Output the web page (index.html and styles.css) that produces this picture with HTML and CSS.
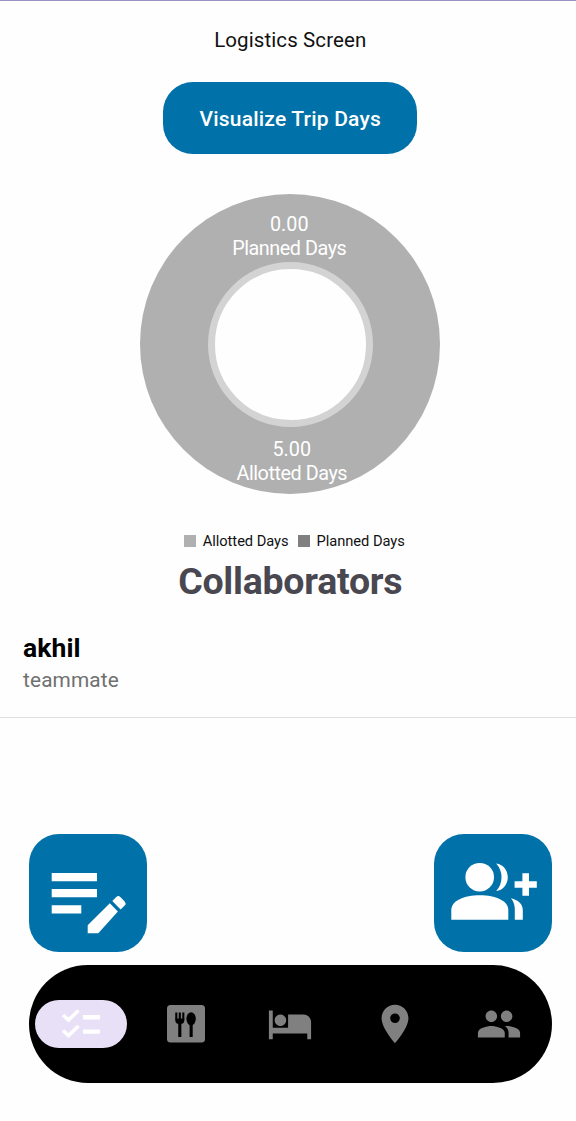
FILE: index.html
```html
<!DOCTYPE html>
<html lang="en">
<head>
<meta charset="utf-8">
<title>Logistics Screen</title>
<link rel="stylesheet" href="styles.css">
</head>
<body>
<main class="screen">
  <h1 class="title"><span>Logistics Screen</span></h1>
  <button class="visualize"><span>Visualize Trip Days</span></button>
  <section class="donut">
    <div class="slice-label planned"><span class="value">0.00</span><span class="name">Planned Days</span></div>
    <div class="hole"></div>
    <div class="slice-label allotted"><span class="value">5.00</span><span class="name">Allotted Days</span></div>
  </section>
  <div class="legend">
    <i class="swatch light"></i><span class="key">Allotted Days</span>
    <i class="swatch dark"></i><span class="key">Planned Days</span>
  </div>
  <h2 class="heading"><span>Collaborators</span></h2>
  <article class="person">
    <strong class="person-name"><span>akhil</span></strong>
    <span class="person-role"><span>teammate</span></span>
  </article>
  <div class="actions">
    <button class="fab" aria-label="Edit notes">
      <svg viewBox="0 0 118 118" fill="#fff">
        <path d="M22.7 39H68v8.3H22.7zM22.7 55H68v8.3H22.7zM22.7 71.2h29.6v8.3H22.7z"/>
        <path d="M58.7 91.2 80.8 69.3 88.9 77.4 69.3 99.3H58.7zM83.3 67l4-4q2-1.8 4 0l4.4 4.6q1.8 2 0 4L91.6 75.4z"/>
      </svg>
    </button>
    <button class="fab" aria-label="Add collaborator">
      <svg viewBox="0 0 118 118" fill="#fff">
        <circle cx="45.7" cy="43.2" r="14.3"/>
        <path d="M17.3 85.7V76C17.3 67 30 61.3 45.8 61.3S74.3 67 74.3 76v9.7z"/>
        <path d="M62.2 29.4C69 30 73.8 36 73.8 43.2S69 56.4 62.2 57Q67.5 51 67.500 43.2T62.2 29.4z"/>
        <path d="M77 64.3C84 66 88.8 70 88.8 76v9.7h-8V76Q80.8 69 77 64.3z"/>
        <path d="M88.4 39.3H95v7.9h7.8v6.6H95v7.9h-6.6v-7.9h-7.8v-6.6h7.8z"/>
      </svg>
    </button>
  </div>
  <nav class="nav">
    <a class="tab active">
      <svg viewBox="0 0 92 48" width="92" height="48">
        <path d="M28 15l5.500 5 10-9.500M28 30.500l5.500 5 10-9.500" fill="none" stroke="#fff" stroke-width="3.600"/>
        <path d="M48 15h17v4.600H48zM48 29.600h17v4.200H48z" fill="#fff"/>
      </svg>
    </a>
    <a class="tab">
      <svg viewBox="0 0 38 38" width="38" height="38">
        <rect width="38" height="37.500" rx="3.500" fill="#808080"/>
        <path d="M9.300 7.500v7M12.800 7.500v7M16.300 7.500v7" fill="none" stroke="#000" stroke-width="2.100"/>
        <path d="M8.250 13.500h9.100v1.500q0 3.300-3 4V32h-3.100V19q-3-.7-3-4zM22.600 18h3.100v14h-3.100z"/>
        <ellipse cx="24.100" cy="13.800" rx="4.700" ry="6.500"/>
      </svg>
    </a>
    <a class="tab">
      <svg viewBox="0 0 24 24" width="46" height="46" fill="#808080"><path d="M7 13c1.660 0 3-1.340 3-3S8.660 7 7 7s-3 1.340-3 3 1.340 3 3 3zm12-6h-8v7H3V5H1v15h2v-3h18v3h2v-9c0-2.210-1.790-4-4-4z"/></svg>
    </a>
    <a class="tab">
      <svg viewBox="0 0 24 24" width="46" height="46" fill="#808080"><path d="M12 2C8.130 2 5 5.130 5 9c0 5.250 7 13 7 13s7-7.750 7-13c0-3.870-3.130-7-7-7zm0 9.500a2.500 2.500 0 1 1 0-5 2.500 2.500 0 0 1 0 5z"/></svg>
    </a>
    <a class="tab">
      <svg viewBox="0 0 24 24" width="46" height="46" fill="#808080"><path d="M16 11c1.660 0 2.990-1.340 2.990-3S17.660 5 16 5c-1.660 0-3 1.340-3 3s1.340 3 3 3zm-8 0c1.660 0 2.990-1.340 2.990-3S9.660 5 8 5C6.340 5 5 6.340 5 8s1.340 3 3 3zm0 2c-2.330 0-7 1.170-7 3.500V19h14v-2.500c0-2.330-4.670-3.500-7-3.500zm8 0c-.290 0-.620.020-.970.050 1.160.840 1.970 1.970 1.970 3.450V19h6v-2.500c0-2.330-4.670-3.500-7-3.500z"/></svg>
    </a>
  </nav>
</main>
</body>
</html>
```
FILE: styles.css
```css
* { box-sizing: border-box; }
body { margin: 0; background: #fefefe; font-family: Roboto, "Liberation Sans", sans-serif; }
.screen {
  display: flex; flex-direction: column; align-items: center;
  height: 1121px; padding: 0 24.5px 0 29px; border-top: 1px solid #9b92c4; overflow: hidden;
}
h1, h2 { margin: 0; }
button { border: 0; padding: 0; font-family: inherit; background: #0072a9; color: #fff; }
.title { margin-top: 26px; font-size: 20.5px; line-height: 26px; font-weight: 400; color: #111; letter-spacing: .1px; }
.visualize {
  width: 254px; height: 72px; margin-top: 29px; border-radius: 30px;
  font-size: 21px; line-height: 26px; font-weight: 500; letter-spacing: .2px; padding-top: 2px;
}
.donut {
  display: flex; flex-direction: column; align-items: center;
  width: 300px; height: 300px; margin-top: 39.5px; padding-top: 19px;
  border-radius: 50%; background: #b0b0b0; flex: none;
}
.slice-label { display: flex; flex-direction: column; align-items: center; height: 49px; font-size: 19.8px; line-height: 24px; color: #fff; }
.name { letter-spacing: -.45px; }
.planned { margin-left: -2px; }
.hole { width: 165px; height: 165px; border: 7.5px solid #d3d3d3; border-radius: 50%; background: #fefefe; flex: none; }
.allotted { margin-top: 11px; margin-left: 3px; }
.legend { display: flex; align-items: center; height: 18px; margin-top: 38.5px; margin-left: 8px; font-size: 14.7px; letter-spacing: -.05px; color: #111; }
.swatch { width: 12px; height: 12px; background: #b0b0b0; }
.swatch.dark { margin-left: 9px; background: #808080; }
.key { margin-left: 7px; }
.heading { margin-top: 8px; font-size: 37.5px; line-height: 47px; font-weight: 700; letter-spacing: -.25px; color: #49474f; }
.person {
  display: flex; flex-direction: column; align-items: flex-start; align-self: stretch;
  height: 113px; margin: 0 -24.5px 0 -29px; padding: 27px 23px 0; border-bottom: 1.5px solid #dedede;
}
.person-name { font-size: 26.5px; line-height: 32px; font-weight: 700; letter-spacing: .1px; color: #000; }
.person-role { margin-top: 2px; font-size: 20.8px; line-height: 28px; letter-spacing: .15px; color: #707070; }
.actions { display: flex; justify-content: space-between; align-self: stretch; margin-top: 116px; }
.fab { width: 118px; height: 118px; border-radius: 30px; }
.fab svg { display: block; width: 100%; height: 100%; }
.nav {
  display: flex; align-items: center; align-self: stretch; height: 118px; flex: none;
  margin-top: 13px; border-radius: 59px; background: #000;
}
.tab { display: flex; align-items: center; justify-content: center; flex: 1; }
.active svg { border-radius: 24px; background: #e8e0f7; }
```
